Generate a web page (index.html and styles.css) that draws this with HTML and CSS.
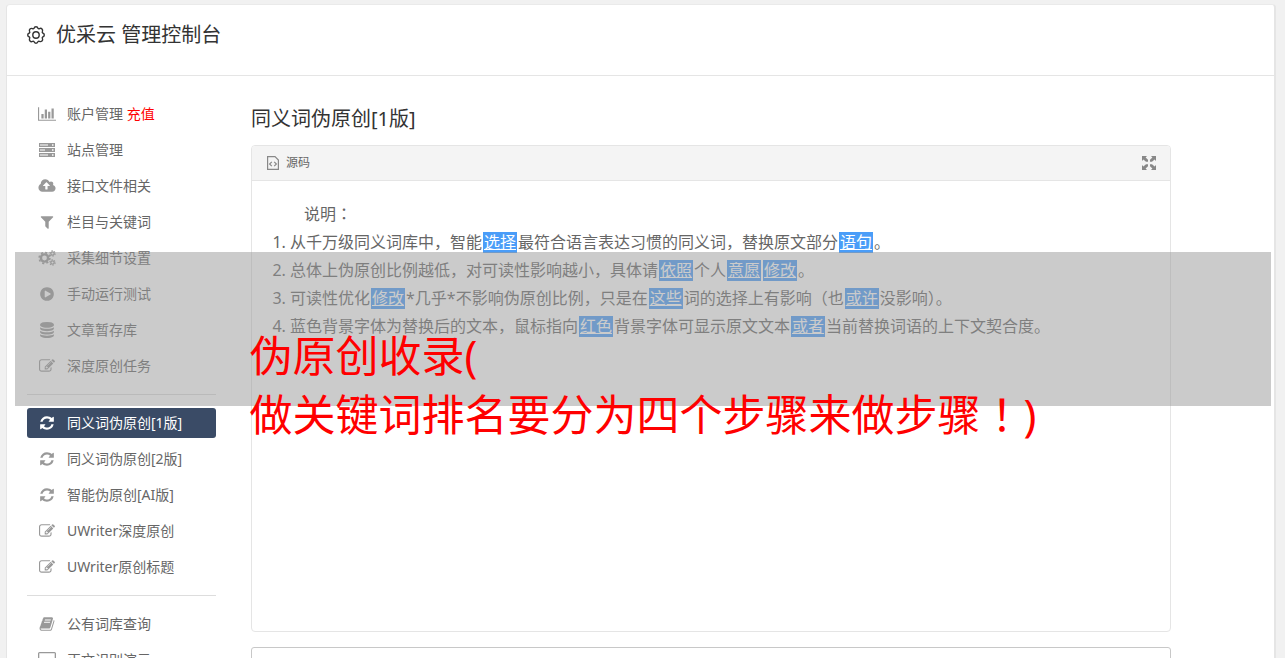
FILE: index.html
```html
<!DOCTYPE html>
<html lang="zh-CN">
<head>
  <meta charset="utf-8">
  <meta name="viewport" content="width=device-width, initial-scale=1.0">
  <title>优采云 管理控制台</title>
  <link rel="stylesheet" href="styles.css">
</head>
<body>
  <!-- Icon sprite -->
  <svg class="sprite" aria-hidden="true">
    <symbol id="i-refresh" viewBox="0 0 1792 1792"><path d="M1639 1056q0 5-1 7-64 268-268 434.500t-478 166.500q-146 0-282.500-55t-243.500-157l-129 129q-19 19-45 19t-45-19-19-45v-448q0-26 19-45t45-19h448q26 0 45 19t19 45-19 45l-137 137q71 66 161 102t187 36q134 0 250-65t186-179q11-17 53-117 8-23 30-23h192q13 0 22.500 9.500t9.500 22.500zm25-800v448q0 26-19 45t-45 19h-448q-26 0-45-19t-19-45 19-45l138-138q-148-137-349-137-134 0-250 65t-186 179q-11 17-53 117-8 23-30 23h-199q-13 0-22.500-9.500t-9.500-22.500v-7q65-268 270-434.500t480-166.500q146 0 284 55.500t245 156.500l130-129q19-19 45-19t45 19 19 45z"/></symbol>
    <symbol id="i-edit" viewBox="0 0 1792 1792"><path d="M888 1184l116-116-152-152-116 116v56h96v96h56zm440-720q-16-16-33 1l-350 350q-17 17-1 33t33-1l350-350q17-17 1-33zm80 594v190q0 119-84.500 203.500t-203.500 84.500h-832q-119 0-203.500-84.500t-84.500-203.500v-832q0-119 84.500-203.500t203.500-84.500h832q63 0 117 25 15 7 18 23 3 17-9 29l-49 49q-14 14-32 8-23-6-45-6h-832q-66 0-113 47t-47 113v832q0 66 47 113t113 47h832q66 0 113-47t47-113v-126q0-13 9-22l64-64q15-15 35-7t20 29zm-96-738l288 288-672 672h-288v-288zm444 132l-92 92-288-288 92-92q28-28 68-28t68 28l152 152q28 28 28 68t-28 68z"/></symbol>
  </svg>

  <div class="console">
    <header class="console-header">
      <svg class="gear" viewBox="0 0 18 18" fill="none" stroke="currentColor" stroke-width="1.4" stroke-linejoin="round">
        <path d="M7 2.400Q7.400.7 9 .7T11 2.400Q11.600 3.100 12.500 2.600Q14 1.900 15 3T15.400 5.500Q14.900 6.400 15.700 7Q17.300 7.400 17.300 9T15.700 11Q14.900 11.600 15.400 12.500Q16.100 14 15 15T12.500 15.400Q11.600 14.900 11 15.700Q10.600 17.300 9 17.300T7 15.700Q6.400 14.900 5.500 15.400Q4 16.100 3 15T2.600 12.500Q3.100 11.600 2.400 11Q.7 10.600.7 9T2.400 7Q3.100 6.400 2.600 5.500Q1.900 4 3 3T5.500 2.600Q6.400 3.100 7 2.400Z"/>
        <circle cx="9" cy="9" r="3.200"/>
      </svg>
      <h1>优采云 管理控制台</h1>
    </header>

    <div class="console-body">
      <!-- Sidebar -->
      <nav class="sidebar">
        <ul>
          <li><a href="#"><svg class="icon wide" viewBox="0 0 2048 1792"><path d="M640 896v512h-256v-512h256zm384-512v1024h-256v-1024h256zm1024 1152v128h-2048v-1536h128v1408h1920zm-640-896v768h-256v-768h256zm384-384v1152h-256v-1152h256z"/></svg><span>账户管理 <em>充值</em></span></a></li>
          <li><a href="#"><svg class="icon wide" viewBox="0 0 18 16"><path fill-rule="evenodd" d="M1 1h16v4H1zM2 2.500v1h8v-1zM14 2.300v1.400h1.500V2.300zM1 6h16v4H1zM2 7.500v1h5v-1zM14 7.300v1.400h1.500V7.300zM1 11h16v4H1zM2 12.500v1h8v-1zM14 12.300v1.400h1.500v-1.400z"/></svg><span>站点管理</span></a></li>
          <li><a href="#"><svg class="icon wide" viewBox="0 0 1920 1792"><path d="M1280 864q0-14-9-23l-352-352q-9-9-23-9t-23 9l-351 351q-10 12-10 24 0 14 9 23t23 9h224v352q0 13 9.500 22.500t22.500 9.500h192q13 0 22.500-9.500t9.500-22.500v-352h224q13 0 22.500-9.500t9.500-22.500zm640 288q0 159-112.500 271.500t-271.500 112.500h-1088q-185 0-316.500-131.500t-131.500-316.500q0-130 70-240t188-165q-2-30-2-43 0-212 150-362t362-150q156 0 285.500 87t188.500 231q71-62 166-62 106 0 181 75t75 181q0 76-41 138 130 31 213.500 135.500t83.500 238.500z"/></svg><span>接口文件相关</span></a></li>
          <li><a href="#"><svg class="icon" viewBox="0 0 1792 1792"><path d="M1595 295q17 41-14 70l-493 493v742q0 42-39 59-13 5-25 5-27 0-45-19l-256-256q-19-19-19-45v-486l-493-493q-31-29-14-70 17-39 59-39h1280q42 0 59 39z"/></svg><span>栏目与关键词</span></a></li>
          <li><a href="#"><svg class="icon wide" viewBox="0 0 18 16" fill="none" stroke="currentColor"><circle cx="6.500" cy="8" r="3.600" stroke-width="2.400"/><circle cx="6.500" cy="8" r="5.400" stroke-width="1.600" stroke-dasharray="2.120 2.120"/><circle cx="14.500" cy="3.500" r="1.700" stroke-width="1.300"/><circle cx="14.500" cy="3.500" r="2.700" stroke-width="1.100" stroke-dasharray="1.410 1.410"/><circle cx="14.500" cy="12.500" r="1.700" stroke-width="1.300"/><circle cx="14.500" cy="12.500" r="2.700" stroke-width="1.100" stroke-dasharray="1.410 1.410"/></svg><span>采集细节设置</span></a></li>
          <li><a href="#"><svg class="icon" viewBox="0 0 1792 1792"><path d="M896 128q209 0 385.500 103t279.500 279.500 103 385.500-103 385.500-279.500 279.500-385.500 103-385.500-103-279.500-279.500-103-385.500 103-385.500 279.500-279.500 385.500-103zm384 823q32-18 32-55t-32-55l-544-320q-31-19-64-1-32 19-32 56v640q0 37 32 56 16 8 32 8 17 0 32-9z"/></svg><span>手动运行测试</span></a></li>
          <li><a href="#"><svg class="icon" viewBox="0 0 1792 1792"><path d="M896 768q237 0 443-43t325-127v170q0 69-103 128t-280 93.500-385 34.500-385-34.500-280-93.500-103-128v-170q119 84 325 127t443 43zm0 768q237 0 443-43t325-127v170q0 69-103 128t-280 93.500-385 34.500-385-34.500-280-93.500-103-128v-170q119 84 325 127t443 43zm0-384q237 0 443-43t325-127v170q0 69-103 128t-280 93.500-385 34.500-385-34.500-280-93.500-103-128v-170q119 84 325 127t443 43zm0-1152q208 0 385 34.500t280 93.500 103 128v128q0 69-103 128t-280 93.500-385 34.500-385-34.500-280-93.500-103-128v-128q0-69 103-128t280-93.500 385-34.500z"/></svg><span>文章暂存库</span></a></li>
          <li><a href="#"><svg class="icon"><use href="#i-edit"/></svg><span>深度原创任务</span></a></li>
        </ul>
        <ul>
          <li><a href="#" class="active"><svg class="icon"><use href="#i-refresh"/></svg><span>同义词伪原创[1版]</span></a></li>
          <li><a href="#"><svg class="icon"><use href="#i-refresh"/></svg><span>同义词伪原创[2版]</span></a></li>
          <li><a href="#"><svg class="icon"><use href="#i-refresh"/></svg><span>智能伪原创[AI版]</span></a></li>
          <li><a href="#"><svg class="icon"><use href="#i-edit"/></svg><span>UWriter深度原创</span></a></li>
          <li><a href="#"><svg class="icon"><use href="#i-edit"/></svg><span>UWriter原创标题</span></a></li>
        </ul>
        <ul>
          <li><a href="#"><svg class="icon" viewBox="0 0 1792 1792"><path d="M1703 478q40 57 18 129l-275 906q-19 64-76.500 107.500t-122.500 43.500h-923q-77 0-148.500-53.500t-99.500-131.500q-24-67-2-127 0-4 3-27t4-37q1-8-3-21.500t-3-19.500q2-11 8-21t16.500-23.500 16.500-23.500q23-38 45-91.500t30-91.500q3-10 .5-30t-.5-28q3-11 17-28t17-23q21-36 42-92t25-90q1-9-2.500-32t.5-28q4-13 22-30.500t22-22.500q19-26 42.500-84.500t27.500-96.500q1-8-3-25.500t-2-26.500q2-8 9-18t18-23 17-21q8-12 16.500-30.500t15-35 16-36 19.500-32 26.500-23.500 36-11.500 47.500 5.500l-1 3q38-9 51-9h761q74 0 114 56t18 130l-274 906q-36 119-71.500 153.500t-128.500 34.500h-869q-27 0-38 15-11 16-1 43 24 70 144 70h923q29 0 56-15.500t35-41.500l300-987q7-22 5-57 38 15 59 43zm-1064 2q-4 13 2 22.500t20 9.500h608q13 0 25.500-9.500t16.500-22.500l21-64q4-13-2-22.500t-20-9.500h-608q-13 0-25.500 9.500t-16.500 22.500zm-83 256q-4 13 2 22.500t20 9.500h608q13 0 25.500-9.500t16.500-22.500l21-64q4-13-2-22.500t-20-9.500h-608q-13 0-25.500 9.500t-16.500 22.500z"/></svg><span>公有词库查询</span></a></li>
          <li><a href="#"><svg class="icon wide" viewBox="0 0 18 16"><path fill-rule="evenodd" d="M1.500 0h15Q18 0 18 1.500v10q0 1.500-1.500 1.500H11v2h2v1H5v-1h2v-2H1.500Q0 13 0 11.500v-10Q0 0 1.500 0zM1.300 1.300v8.700h15.400V1.300z"/></svg><span>正文识别演示</span></a></li>
        </ul>
      </nav>

      <!-- Main -->
      <main class="main">
        <h2>同义词伪原创[1版]</h2>

        <section class="editor">
          <div class="toolbar">
            <button type="button" class="source">
              <svg viewBox="0 0 12 14" fill="none" stroke="currentColor" stroke-width="1.200"><path d="M.6.600h7.400l3.400 3.400v9.400H.6zM4.800 5.800L2.600 8l2.200 2.200M7.200 5.800L9.400 8l-2.200 2.200"/></svg>
              源码
            </button>
            <button type="button" class="expand" aria-label="全屏">
              <svg viewBox="0 0 14 14" fill="currentColor"><path d="M0 0h5L3.600 1.400 6 3.800v2H4L1.400 3.600 0 5zM14 0v5l-1.400-1.400L10 5.800H8v-2l2.400-2.400L9 0zM0 14V9l1.400 1.400L4 8.200h2v2l-2.400 2.400L5 14zM14 14H9l1.400-1.400L8 10.200v-2h2l2.600 2.200L14 9z"/></svg>
            </button>
          </div>
          <div class="content">
            <p>说明<span class="mid" lang="zh-TW">：</span></p>
            <ol>
              <li>从千万级同义词库中，智能<a href="#">选择</a>最符合语言表达习惯的同义词，替换原文部分<a href="#">语句</a>。</li>
              <li>总体上伪原创比例越低，对可读性影响越小，具体请<a href="#">依照</a>个人<a href="#">意愿</a><a href="#">修改</a>。</li>
              <li>可读性优化<a href="#">修改</a>*几乎*不影响伪原创比例，只是在<a href="#">这些</a>词的选择上有影响（也<a href="#">或许</a>没影响）。</li>
              <li>蓝色背景字体为替换后的文本，鼠标指向<a href="#">红色</a>背景字体可显示原文文本<a href="#">或者</a>当前替换词语的上下文契合度。</li>
            </ol>
          </div>
        </section>

        <textarea class="result" aria-label="结果"></textarea>
      </main>
    </div>
  </div>

  <!-- Caption banner over the page -->
  <div class="banner">
    <p>伪原创收录(<br>做关键词排名要分为四个步骤来做步骤<span class="mid" lang="zh-TW">！</span>)</p>
  </div>
</body>
</html>
```

FILE: styles.css
```css
* {
  box-sizing: border-box;
}

html {
  scrollbar-width: none;
}

body {
  margin: 0;
  padding: 4px 9px 0 6px;
  font-family: "Noto Sans", "Noto Sans CJK SC", sans-serif;
  font-size: 14px;
  color: #666;
  background-color: #f1f1f1;
}

h1, h2, p, ul, ol {
  margin: 0;
  padding: 0;
  font-weight: normal;
}

button {
  padding: 0;
  border: 0;
  background: none;
  font: inherit;
  color: inherit;
  cursor: pointer;
}

.sprite {
  display: none;
}

/* centred full-width punctuation */
.mid {
  font-family: "Noto Sans CJK TC", sans-serif;
  line-height: 1;
}

.console {
  background-color: #fff;
  border: 1px solid #e5e5e5;
  border-right-width: 2px;
  border-top-color: #eaeaea;
  border-radius: 4px;
}

.console-header {
  display: flex;
  align-items: center;
  gap: 11px;
  height: 71px;
  padding: 0 20px 10px;
  border-bottom: 1px solid #e5e5e5;
  color: #333;
}

.console-header h1 {
  font-size: 20px;
  line-height: 30px;
}

.gear {
  width: 18px;
  height: 18px;
}

.console-body {
  display: flex;
  gap: 35px;
  padding: 23px 20px;
}

.sidebar {
  flex: 0 0 189px;
}

.sidebar ul {
  display: flex;
  flex-direction: column;
  gap: 6px;
  list-style: none;
}

.sidebar ul + ul {
  margin-top: 13px;
  padding-top: 13px;
  border-top: 1px solid #ddd;
}

.sidebar a {
  display: grid;
  grid-template-columns: 20px 1fr;
  align-items: center;
  gap: 10px;
  height: 30px;
  padding: 0 10px;
  border-radius: 3px;
  color: #666;
  line-height: 30px;
  text-decoration: none;
  white-space: nowrap;
}

.sidebar em {
  font-style: normal;
  color: #f00;
}

.sidebar .active {
  background-color: #3a4b66;
  color: #fff;
}

.icon {
  width: 16px;
  height: 16px;
  justify-self: center;
  color: #999;
  fill: currentColor;
}

.icon[fill="none"] {
  fill: none;
}

.icon.wide {
  width: 18px;
}

.active .icon {
  color: #fff;
}

.main {
  flex: 1;
  max-width: 920px;
}

.main h2 {
  margin: 5px 0 11px;
  font-size: 20px;
  line-height: 30px;
  color: #333;
}

.editor {
  min-height: 487px;
  border: 1px solid #e5e5e5;
  border-radius: 4px;
}

.toolbar {
  display: flex;
  justify-content: space-between;
  align-items: center;
  height: 35px;
  padding: 0 14px 0 15px;
  background-color: #f4f4f4;
  border-bottom: 1px solid #e5e5e5;
  border-radius: 3px 3px 0 0;
}

.source {
  display: flex;
  align-items: center;
  gap: 7px;
  font-size: 12px;
  line-height: 20px;
}

.source svg {
  width: 12px;
  height: 14px;
  color: #888;
}

.expand svg {
  display: block;
  width: 14px;
  height: 14px;
  color: #888;
}

.content {
  padding: 19px 20px;
  font-size: 16px;
  line-height: 28px;
}

.content p {
  text-indent: 2em;
}

.content ol {
  padding-left: 18px;
}

.content a {
  display: inline-block;
  margin: 0 1px;
  padding: 0 1px;
  background-color: #4a9df8;
  color: #fff;
  line-height: 21px;
}

.result {
  display: block;
  width: 100%;
  height: 120px;
  margin-top: 15px;
  border: 1px solid #c8c8c8;
  border-radius: 3px;
  resize: none;
}

.banner {
  position: absolute;
  top: 252px;
  left: 15px;
  right: 14px;
  display: flex;
  justify-content: center;
  height: 154px;
  padding-top: 74px;
  background-color: rgba(152, 152, 152, 0.5);
  pointer-events: none;
}

.banner p {
  font-size: 43px;
  line-height: 59px;
  color: #f00;
  white-space: nowrap;
}
```
